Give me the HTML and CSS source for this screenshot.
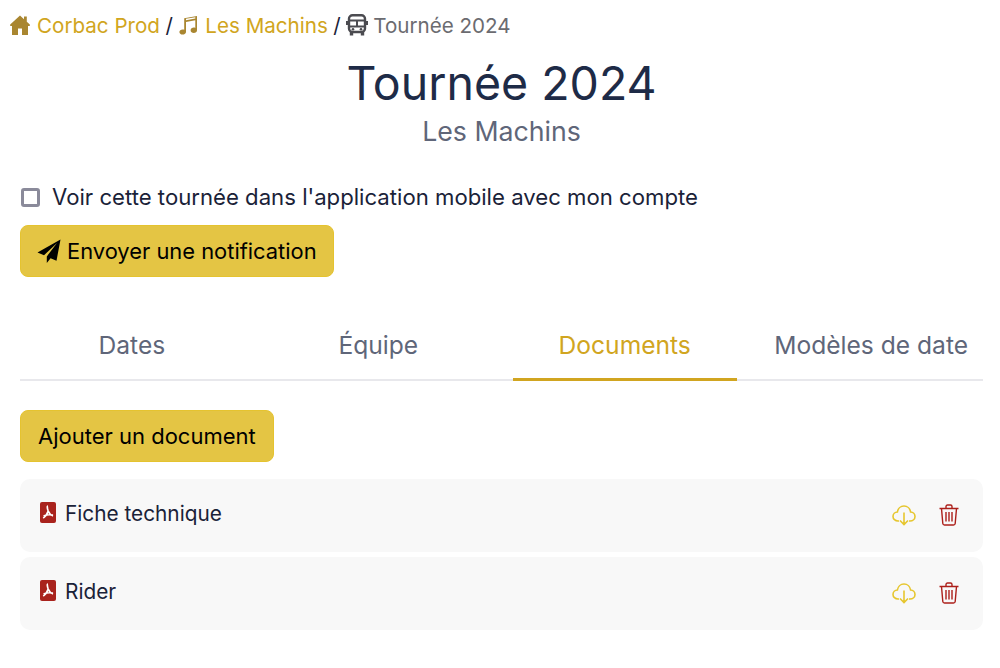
FILE: index.html
```html
<!DOCTYPE html>
<html lang="fr">
<head>
  <meta charset="UTF-8" />
  <title>Tournée 2024</title>
  <link rel="stylesheet" href="styles.css">
</head>
<body>
  <!-- FIL D'ARIANE -->
  <nav class="crumbs">
    <svg class="crumb-icon" viewBox="0 0 20 20"><path d="M10 0.500 0.200 9.400 0.200 11 2 11V20H8V13.500H12V20H18V11L19.800 11 19.800 9.400 16.800 6.700V1.500H14V4.200Z"/></svg>
    <a href="#">Corbac Prod</a>
    <span class="sep">/</span>
    <svg class="crumb-icon" viewBox="0 0 20 20"><path d="M19 1V15.200C19 16.900 17.500 18 15.800 18S12.600 16.900 12.600 15.200 14.100 12.600 15.800 12.600C16.400 12.600 16.900 12.700 17.300 12.900V5.200L8 7V17C8 18.500 6.500 19.600 4.600 19.600S1.400 18.500 1.400 17 2.800 14.400 4.600 14.400C5.200 14.400 5.800 14.500 6.200 14.700V3.200ZM8 3.800V5.200L17.300 3.400V2.300Z" fill-rule="evenodd"/></svg>
    <a href="#">Les Machins</a>
    <span class="sep">/</span>
    <svg class="crumb-icon crumb-bus" viewBox="0 0 22 22" fill="none"><rect x="3" y="1.200" width="16" height="16.800" rx="3.500" stroke-width="2.400"/><path d="M3 6.500H19M3 12.500H19M11 6.500V12.500" stroke-width="2"/><path d="M1 7V11M21 7V11" stroke-width="2"/><path d="M5.500 18V21.500M16.500 18V21.500" stroke-width="3.400"/><circle cx="7" cy="15.300" r="1.300" class="bus-dot"/><circle cx="15" cy="15.300" r="1.300" class="bus-dot"/></svg>
    <span class="crumb-current">Tournée 2024</span>
  </nav>

  <header class="title">
    <h1>Tournée 2024</h1>
    <p>Les Machins</p>
  </header>

  <label class="mobile-check">
    <input type="checkbox" />
    <span>Voir cette tournée dans l'application mobile avec mon compte</span>
  </label>

  <button class="btn btn-notify">
    <svg class="btn-icon" viewBox="0 0 24 24"><path d="M23.500 0.500 0.500 13.500 7 16.200 20 4 9.800 17.400V24L13.600 19.300 19.500 21.700Z"/></svg>
    Envoyer une notification
  </button>

  <div class="tabs">
    <a class="tab" href="#">Dates</a>
    <a class="tab" href="#">Équipe</a>
    <a class="tab active" href="#">Documents</a>
    <a class="tab" href="#">Modèles de date</a>
  </div>

  <button class="btn btn-add">Ajouter un document</button>

  <ul class="docs">
    <li class="doc">
      <svg class="pdf" viewBox="0 0 16 21"><rect width="16" height="21" rx="2" fill="#a9231d"/><path d="M8 4C7 4 7.200 6.500 8.200 9 9.200 11.300 10.600 13.100 13 13.900M8.200 9C7.400 11.500 5.600 14.500 3.200 16M3.600 14.100C6 12.900 10 12.500 13 13.100" fill="none" stroke="#fff" stroke-width="1.700"/></svg>
      <span class="doc-name">Fiche technique</span>
      <svg class="doc-action" viewBox="0 0 24 24" fill="none" stroke="#e6c62e"><path d="M7 18H6C3.200 18 1 15.900 1 13.400 1 11 3 9.100 5.400 9 5.900 5.600 8.600 3 12 3S18.100 5.600 18.600 9C21 9.100 23 11 23 13.400 23 15.900 20.800 18 18 18H17M12 9.500V21.500M8 17.500 12 21.500 16 17.500" stroke-width="1.600"/></svg>
      <svg class="doc-action" viewBox="0 0 24 24" fill="none" stroke="#ac1f1a"><path d="M2.500 5.500H21.500M9 5.500V3.500C9 2.700 9.700 2 10.500 2H13.500C14.300 2 15 2.700 15 3.500V5.500M4.500 5.500 5.800 20.500C5.900 21.400 6.600 22 7.500 22H16.500C17.400 22 18.100 21.400 18.200 20.500L19.500 5.500M9 9V18.500M12 9V18.500M15 9V18.500" stroke-width="1.400"/></svg>
    </li>
    <li class="doc">
      <svg class="pdf" viewBox="0 0 16 21"><rect width="16" height="21" rx="2" fill="#a9231d"/><path d="M8 4C7 4 7.200 6.500 8.200 9 9.200 11.300 10.600 13.100 13 13.900M8.200 9C7.400 11.500 5.600 14.500 3.200 16M3.600 14.100C6 12.900 10 12.500 13 13.100" fill="none" stroke="#fff" stroke-width="1.700"/></svg>
      <span class="doc-name">Rider</span>
      <svg class="doc-action" viewBox="0 0 24 24" fill="none" stroke="#e6c62e"><path d="M7 18H6C3.200 18 1 15.900 1 13.400 1 11 3 9.100 5.400 9 5.900 5.600 8.600 3 12 3S18.100 5.600 18.600 9C21 9.100 23 11 23 13.400 23 15.900 20.800 18 18 18H17M12 9.500V21.500M8 17.500 12 21.500 16 17.500" stroke-width="1.600"/></svg>
      <svg class="doc-action" viewBox="0 0 24 24" fill="none" stroke="#ac1f1a"><path d="M2.500 5.500H21.500M9 5.500V3.500C9 2.700 9.700 2 10.500 2H13.500C14.300 2 15 2.700 15 3.500V5.500M4.500 5.500 5.800 20.500C5.900 21.400 6.600 22 7.500 22H16.500C17.400 22 18.100 21.400 18.200 20.500L19.500 5.500M9 9V18.500M12 9V18.500M15 9V18.500" stroke-width="1.400"/></svg>
    </li>
  </ul>
</body>
</html>
```

FILE: styles.css
```css
body {
  margin: 0;
  padding: 12px 17px 0 20px;
  font-family: Inter, sans-serif;
  background-color: white;
  color: #1a2238;
}

.crumbs {
  display: flex;
  align-items: center;
  height: 26px;
  margin-left: -10px;
  font-size: 20.600px;
}

.crumbs a {
  color: #d1a520;
  text-decoration: none;
}

.crumb-icon {
  width: 20px;
  height: 20px;
  margin-right: 7px;
  fill: #a98630;
}

.crumb-bus {
  width: 22px;
  height: 22px;
  margin-right: 5px;
  fill: none;
  stroke: #4b4b50;
}

.bus-dot {
  fill: #4b4b50;
  stroke: none;
}

.sep {
  margin: 0 5.500px;
}

.crumb-current {
  color: #6b6b70;
}

.title {
  text-align: center;
  margin-top: 15px;
}

.title h1 {
  margin: 0;
  font-size: 46.500px;
  line-height: 60px;
  font-weight: 400;
  color: #1e2b47;
}

.title p {
  margin: 0;
  font-size: 26.700px;
  line-height: 36px;
  color: #5f6679;
}

.mobile-check {
  display: flex;
  align-items: center;
  gap: 12px;
  margin-top: 33px;
  height: 30px;
  font-size: 22.160px;
}

.mobile-check input {
  appearance: none;
  width: 19px;
  height: 19px;
  margin: 0 0 0 1px;
  border: 3px solid #8a8a9a;
  border-radius: 3px;
  background: white;
}

.btn {
  display: flex;
  align-items: center;
  height: 52px;
  padding: 0 17px;
  font-family: Inter, sans-serif;
  font-size: 22px;
  color: black;
  background-color: #e4c544;
  border: 1px solid #e5c32f;
  border-radius: 8px;
}

.btn-notify {
  margin-top: 13px;
  padding: 0 16px;
  gap: 6px;
  font-size: 21.900px;
}

.btn-icon {
  width: 24px;
  height: 24px;
}

.tabs {
  display: grid;
  grid-template-columns: repeat(4, 1fr);
  gap: 22.670px;
  margin-top: 41px;
  border-bottom: 2px solid #e8e8ec;
}

.tab {
  height: 61px;
  line-height: 54px;
  margin-bottom: -2px;
  text-align: center;
  font-size: 24.600px;
  color: #5f6679;
  text-decoration: none;
  white-space: nowrap;
}

.tab.active {
  color: #d1a520;
  border-bottom: 3px solid #d1a520;
  height: 60px;
}

.btn-add {
  margin-top: 29px;
}

.docs {
  list-style: none;
  margin: 17px 0 0;
  padding: 0;
}

.doc {
  display: flex;
  align-items: center;
  height: 73px;
  margin-bottom: 5px;
  padding: 0 22px 4px 20px;
  box-sizing: border-box;
  background-color: #f8f8f8;
  border-radius: 10px;
  font-size: 20.800px;
}

.pdf {
  width: 16px;
  height: 21px;
  margin: 0 9px 3px 0;
}

.doc-name {
  flex: 1;
}

.doc-action {
  width: 24px;
  height: 24px;
  margin: 3px 0 0 21px;
}
```
